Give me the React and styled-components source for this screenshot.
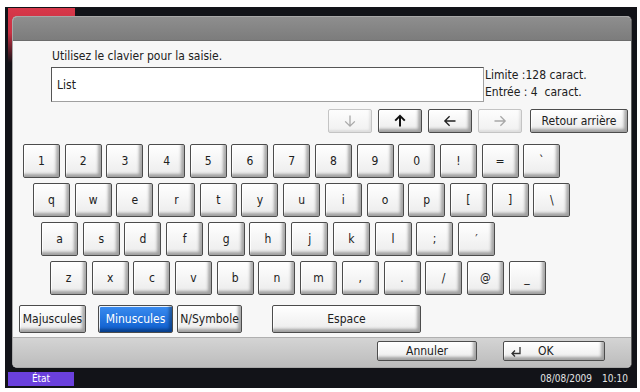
import React from 'react';
import styled, { createGlobalStyle } from 'styled-components';

const GlobalStyle = createGlobalStyle`
  html, body {
    margin: 0;
    padding: 0;
    background: #ffffff;
  }
  body {
    font-family: "DejaVu Sans Condensed", "DejaVu Sans", sans-serif;
  }
`;

const Screen = styled.div`
  width: 640px;
  height: 392px;
  padding: 7px 3px 4px 5px;
  box-sizing: border-box;
`;

const Frame = styled.div`
  height: 100%;
  display: flex;
  flex-direction: column;
  padding: 9px 5px 0 7px;
  box-sizing: border-box;
  background-color: #121318;
  background-image: linear-gradient(to bottom, #d8384a 0, #c83042 25px, #121318 55px);
  background-size: 67px 55px;
  background-position: 3px 1px;
  background-repeat: no-repeat;
`;

const Panel = styled.div`
  height: 352px;
  display: flex;
  flex-direction: column;
  border: 1px solid #a8a8a8;
  border-right-color: #606060;
  border-radius: 5px;
  overflow: hidden;
  box-sizing: border-box;
  background: #f7f7f7;
`;

const Header = styled.div`
  height: 23px;
  flex: none;
  background: linear-gradient(to bottom, #8e8e8e, #7c7c7c);
  border-bottom: 1px solid #6c6c6c;
`;

const Body = styled.div`
  flex: 1;
  display: flex;
  flex-direction: column;
  padding: 8px 3px 0 0;
`;

const Prompt = styled.div`
  margin-left: 39px;
  height: 15px;
  line-height: 15px;
  font-size: 12px;
  color: #202020;
`;

const InputRow = styled.div`
  display: flex;
  margin-top: 3px;
  margin-left: 38px;
`;

const TextField = styled.div`
  width: 433px;
  height: 35px;
  box-sizing: border-box;
  display: flex;
  align-items: center;
  padding-left: 5px;
  background: #ffffff;
  border: 1px solid #a0a0a0;
  border-top-color: #555555;
  border-left-color: #555555;
  font-size: 12px;
  color: #202020;
`;

const Counts = styled.div`
  margin-left: 1px;
  font-size: 12px;
  line-height: 17px;
  color: #202020;
  white-space: pre;
`;

const ArrowRow = styled.div`
  display: flex;
  justify-content: flex-end;
  gap: 6px;
  margin-top: 7px;
  height: 24px;
`;

const Key = styled.button`
  width: ${p => p.$w || 37}px;
  height: ${p => p.$h || 34}px;
  margin-left: ${p => p.$ml || 0}px;
  flex: none;
  padding: 0;
  box-sizing: border-box;
  display: flex;
  align-items: center;
  justify-content: center;
  font-family: "DejaVu Sans Condensed", "DejaVu Sans", sans-serif;
  font-size: 12px;
  white-space: nowrap;
  color: ${p => (p.$active ? '#ffffff' : p.$off ? '#a0a0a0' : '#202020')};
  border: 1px solid ${p => (p.$off ? '#c4c4c4' : '#4c4c4c')};
  border-radius: 2px;
  background: ${p =>
    p.$active
      ? 'linear-gradient(to bottom, #3a8cf0, #0c5ccc)'
      : p.$off
      ? 'linear-gradient(to bottom, #fdfdfd, #f0f0f0)'
      : 'linear-gradient(to bottom, #ffffff, #ebebeb)'};
  box-shadow: ${p =>
    p.$off
      ? 'inset -2px -2px 2px rgba(0,0,0,0.08)'
      : 'inset -3px -3px 3px rgba(0,0,0,0.32), inset 1px 1px 0 rgba(255,255,255,0.9)'};
`;

const KeyRow = styled.div`
  display: flex;
  gap: 4.7px;
  padding-left: ${p => p.$indent}px;
  margin-top: ${p => p.$top}px;
`;

const ModeRow = styled.div`
  display: flex;
  padding-left: 6px;
  margin-top: 10px;
`;

const Footer = styled.div`
  height: 30px;
  flex: none;
  display: flex;
  justify-content: flex-end;
  gap: 26px;
  padding: 3px 26px 0 0;
  box-sizing: border-box;
  background: linear-gradient(to bottom, #d4d4d4, #bcbcbc);
  border-top: 1px solid #b0b0b0;
`;

const FooterButton = styled(Key)`
  height: 20px;
  justify-content: ${p => (p.$icon ? 'flex-start' : 'center')};
  padding-left: ${p => (p.$icon ? 6 : 0)}px;
  gap: 16px;
`;

const StatusBar = styled.div`
  height: 20px;
  display: flex;
  align-items: center;
  justify-content: space-between;
  margin-left: -4px;
  padding-right: 4px;
  font-size: 10px;
  color: #e4e4e4;
`;

const StateTab = styled.div`
  width: 66px;
  height: 14px;
  line-height: 14px;
  margin-top: 2px;
  text-align: center;
  background: #6a40dc;
  color: #ffffff;
  font-size: 10px;
`;

const Clock = styled.div`
  display: flex;
  gap: 10px;
`;

const Arrow = ({ dir, bold, color }) => {
  const rot = { up: 0, right: 90, down: 180, left: 270 }[dir];
  return (
    <svg width="14" height="14" viewBox="0 0 14 14" style={{ transform: `rotate(${rot}deg)` }}>
      <path
        d="M7 12.5 V1.8 M2.2 6.6 L7 1.8 L11.8 6.6"
        fill="none"
        stroke={color}
        strokeWidth={bold ? 2 : 1.3}
      />
    </svg>
  );
};

const EnterIcon = () => (
  <svg width="12" height="11" viewBox="0 0 12 11">
    <path d="M10 1 V7.5 H2 M5 4.5 L2 7.5 L5 10.5" fill="none" stroke="#303030" strokeWidth="1.3" />
  </svg>
);

const rows = [
  { keys: ['1', '2', '3', '4', '5', '6', '7', '8', '9', '0', '!', '=', '`'], indent: 10, top: 11 },
  { keys: ['q', 'w', 'e', 'r', 't', 'y', 'u', 'i', 'o', 'p', '[', ']', '\\'], indent: 20, top: 5 },
  { keys: ['a', 's', 'd', 'f', 'g', 'h', 'j', 'k', 'l', ';', '\u2032'], indent: 28, top: 5 },
  { keys: ['z', 'x', 'c', 'v', 'b', 'n', 'm', ',', '.', '/', '@', '_'], indent: 37, top: 5 },
];

export default function App() {
  return (
    <Screen>
      <GlobalStyle />
      <Frame>
        <Panel>
          <Header />
          <Body>
            <Prompt>Utilisez le clavier pour la saisie.</Prompt>
            <InputRow>
              <TextField>List</TextField>
              <Counts>
                {'Limite :128 caract.\nEntrée : 4  caract.'}
              </Counts>
            </InputRow>
            <ArrowRow>
              <Key $w={44} $h={24} $off>
                <Arrow dir="down" color="#a8a8a8" />
              </Key>
              <Key $w={44} $h={24}>
                <Arrow dir="up" bold color="#101010" />
              </Key>
              <Key $w={44} $h={24}>
                <Arrow dir="left" color="#202020" />
              </Key>
              <Key $w={44} $h={24} $off>
                <Arrow dir="right" color="#a8a8a8" />
              </Key>
              <Key $w={98} $h={24} $ml={2}>Retour arrière</Key>
            </ArrowRow>
            {rows.map((row, i) => (
              <KeyRow key={i} $indent={row.indent} $top={row.top}>
                {row.keys.map(k => (
                  <Key key={k}>{k}</Key>
                ))}
              </KeyRow>
            ))}
            <ModeRow>
              <Key $w={67} $h={28}>Majuscules</Key>
              <Key $w={75} $h={28} $ml={12} $active>Minuscules</Key>
              <Key $w={65} $h={28} $ml={4}>N/Symbole</Key>
              <Key $w={149} $h={28} $ml={30}>Espace</Key>
            </ModeRow>
          </Body>
          <Footer>
            <FooterButton $w={100}>Annuler</FooterButton>
            <FooterButton $w={102} $icon>
              <EnterIcon />
              <span>OK</span>
            </FooterButton>
          </Footer>
        </Panel>
        <StatusBar>
          <StateTab>État</StateTab>
          <Clock>
            <span>08/08/2009</span>
            <span>10:10</span>
          </Clock>
        </StatusBar>
      </Frame>
    </Screen>
  );
}
